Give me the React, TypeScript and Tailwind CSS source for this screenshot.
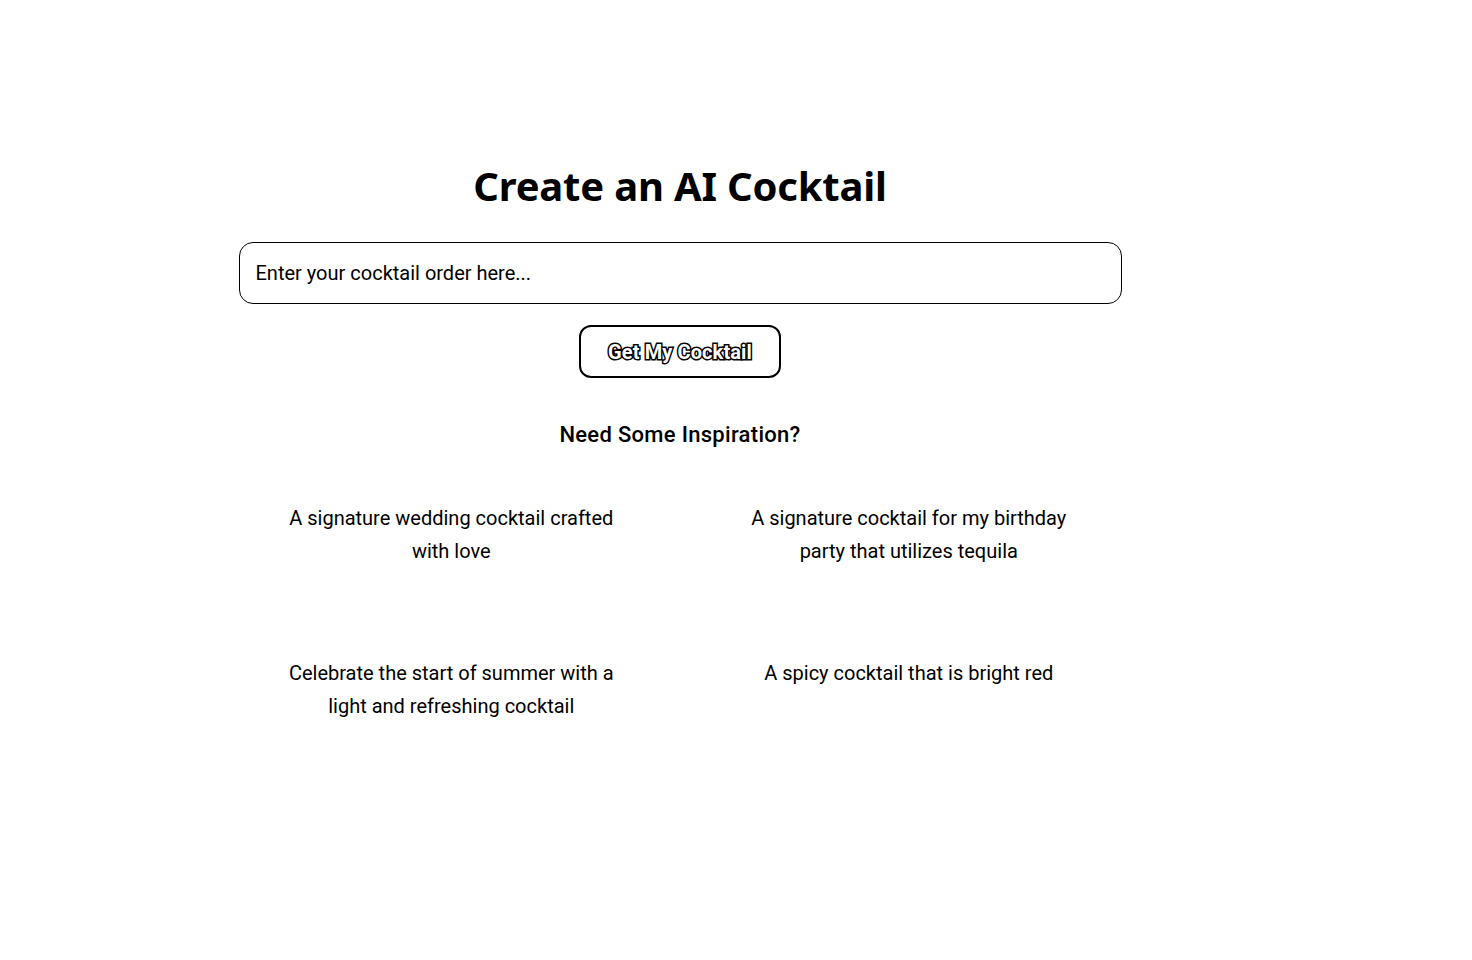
import React from "react";

const suggestions = [
  "A signature wedding cocktail crafted with love",
  "A signature cocktail for my birthday party that utilizes tequila",
  "Celebrate the start of summer with a light and refreshing cocktail",
  "A spicy cocktail that is bright red",
];

export default function App() {
  return (
    <div className="min-h-[960px] w-full bg-white flex text-black font-['Roboto',sans-serif]">
      <main className="w-[1360px] flex justify-center pt-[160px]">
        <div className="w-[883px] flex flex-col items-center">
          <h1 className="font-['Noto_Sans',sans-serif] font-bold text-[40px] leading-[52px] tracking-[-0.2px]">
            Create an AI Cocktail
          </h1>
          <input
            className="mt-[30px] w-full h-[62px] rounded-[14px] border border-black px-4 text-[20px] placeholder:text-black outline-none"
            placeholder="Enter your cocktail order here..."
          />
          <button className="mt-[21px] w-[202px] h-[53px] rounded-[12px] border-2 border-black bg-white text-white font-bold text-[20px] tracking-[0.1px] [-webkit-text-stroke:3px_black] [paint-order:stroke_fill]">
            Get My Cocktail
          </button>
          <h2 className="mt-[43px] text-[22px] font-medium leading-[28px] tracking-[0.3px]">
            Need Some Inspiration?
          </h2>
          <div className="mt-[28px] w-full grid grid-cols-2 gap-x-8 gap-y-[32px]">
            {suggestions.map((s) => (
              <div
                key={s}
                className="h-[123px] px-10 pt-[25px] text-center text-[20px] leading-[33px]"
              >
                {s}
              </div>
            ))}
          </div>
        </div>
      </main>
      <div className="flex-1" />
    </div>
  );
}
